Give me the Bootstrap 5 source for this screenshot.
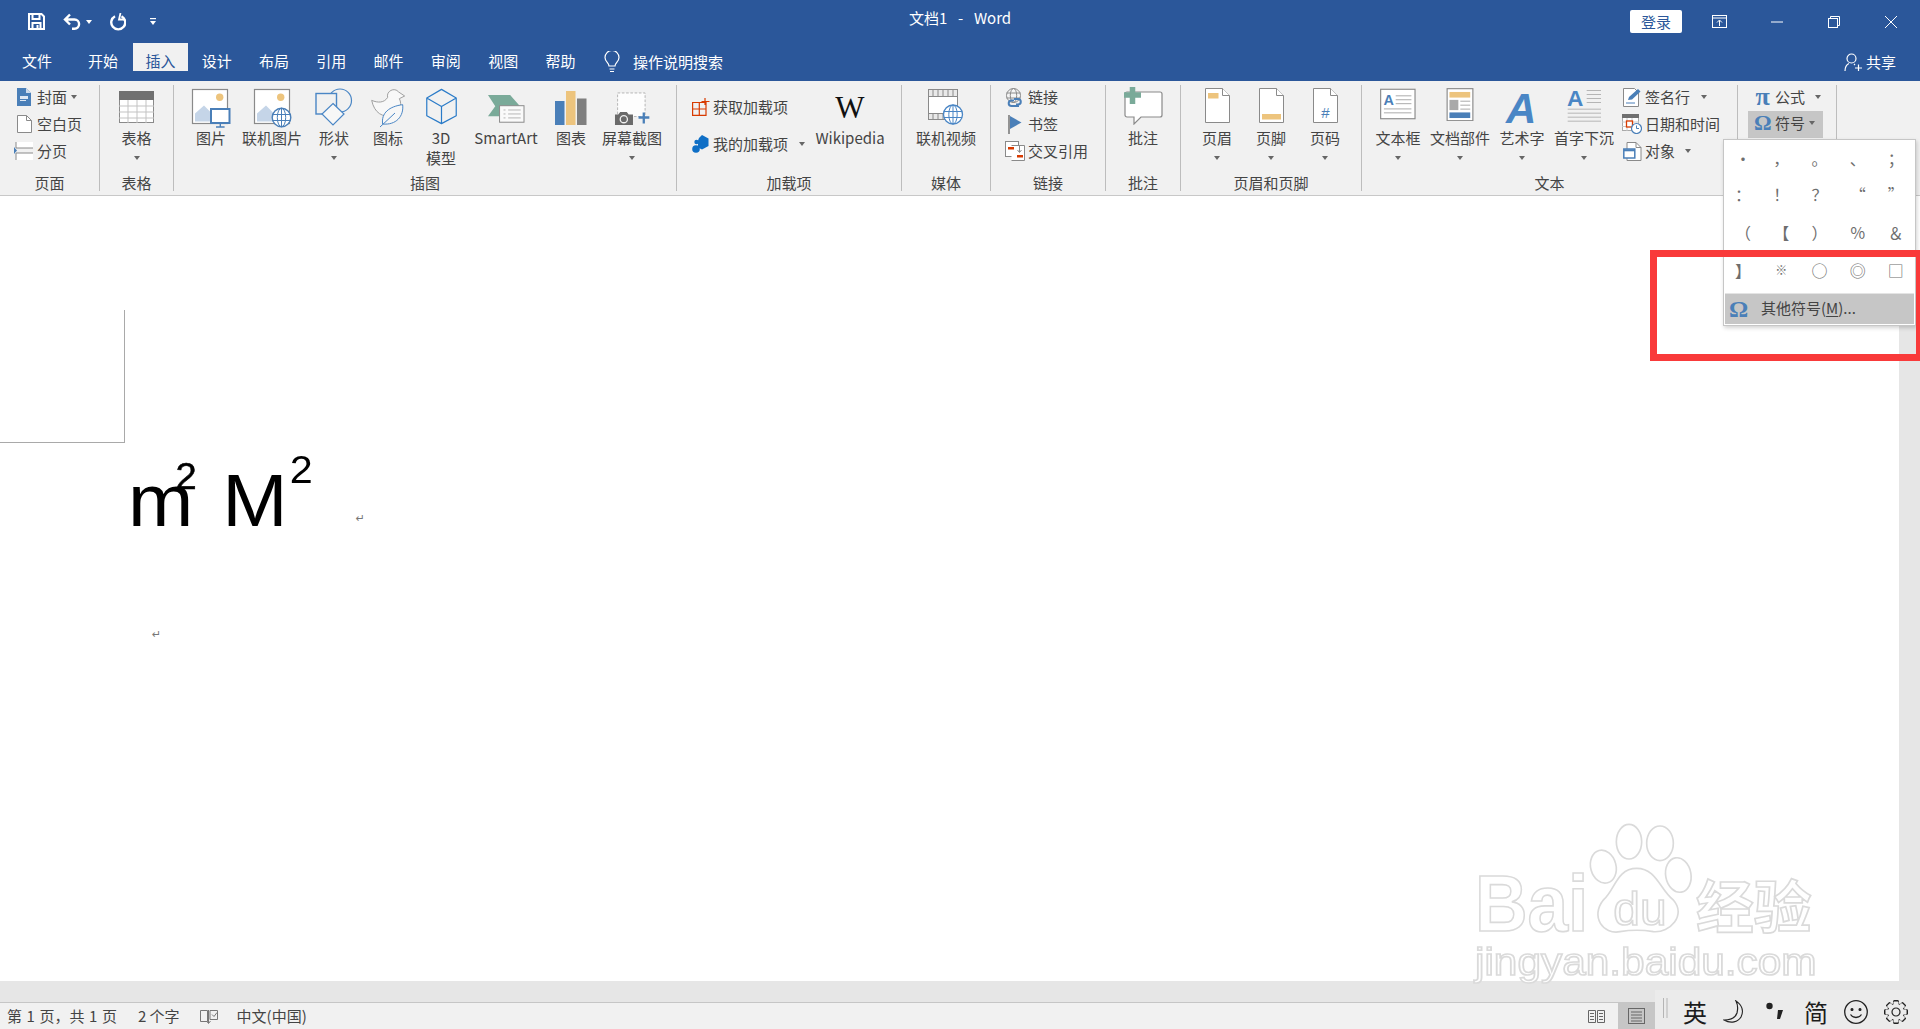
<!DOCTYPE html>
<html lang="zh-CN">
<head>
  <meta charset="UTF-8">
  <meta name="viewport" content="width=device-width, initial-scale=1.0">
  <title>文档1 - Word</title>
  <link href="https://cdn.jsdelivr.net/npm/bootstrap@5.3.0/dist/css/bootstrap.min.css" rel="stylesheet">
  <style>
    html, body { height: 100%; }
    body {
      font-family: "Noto Sans CJK SC", "Liberation Sans", sans-serif;
      font-size: 15px;
      line-height: 20px;
      color: #444;
      background: #fff;
      overflow: hidden;
      position: relative;
    }
    svg { display: block; flex: none; }

    /* 间距 */
    .ml-4 { margin-left: 4px; } .ml-10 { margin-left: 10px; } .ml-11 { margin-left: 11px; }
    .ml-15 { margin-left: 15px; } .ml-16 { margin-left: 16px; } .ml-18 { margin-left: 18px; }
    .ml-19 { margin-left: 19px; } .ml-20 { margin-left: 20px; } .ml-21 { margin-left: 21px; }
    .ml-23 { margin-left: 23px; } .ml-44 { margin-left: 44px; } .ml-45 { margin-left: 45px; }
    .mt-i1 { margin-top: 1px; } .mt-i3 { margin-top: 3px; } .mt-i4 { margin-top: 4px; } .mt-i6 { margin-top: 6px; }

    /* 标题栏 */
    .titlebar { height: 43px; background: #2b579a; color: #fff; display: grid; grid-template-columns: 1fr auto 1fr; align-items: center; }
    .qat { padding-left: 28px; }
    .qat .caret { border-top-color: #fff; }
    .win-btns { padding-right: 23px; }
    .login { width: 52px; height: 23px; line-height: 23px; background: #fff; color: #2b579a; text-align: center; border-radius: 2px; margin-right: 30px; }
    .title-text { margin-top: -8px; word-spacing: 2px; }

    /* 选项卡 */
    .tabs { height: 38px; background: #2b579a; color: #fff; align-items: stretch; }
    .tabs .nav-link { color: #fff; padding: 8px 0 0; width: 57.3px; text-align: center; }
    .tabs .nav-link.active { background: #f1f1f1; color: #2b579a; width: 55px; margin: 0 0 0 1px; }
    .tabs .tab-file { width: 74px; }
    .tabs .tab-home { width: 58px; }
    .tell { margin-left: 15px; gap: 13px; }
    .share { margin-left: auto; padding-right: 24px; gap: 4px; }

    /* 功能区 */
    .ribbon { height: 115px; padding-top: 4px; background: #f1f1f1; border-bottom: 1px solid #c8c8c8; align-items: flex-start; }
    .rgroup { height: 106px; border-right: 1px solid #bdbdbd; display: flex; flex-direction: column; flex: none; }
    .g100 { width: 100px; } .g74 { width: 74px; } .g503 { width: 503px; } .g225 { width: 225px; } .g89 { width: 89px; }
    .g115 { width: 115px; } .g75 { width: 75px; } .g181 { width: 181px; } .g376 { width: 376px; } .g99 { width: 99px; }
    .rbody { height: 90px; display: flex; }
    .pl-5 { padding-left: 5px; } .pl-9 { padding-left: 9px; } .pl-10 { padding-left: 10px; } .pl-12 { padding-left: 12px; } .pl-14 { padding-left: 14px; }
    .rlabel { height: 16px; line-height: 16px; text-align: center; }
    .rbig { display: flex; flex-direction: column; align-items: center; padding-top: 3px; flex: none; }
    .rbig .ico { height: 40px; display: flex; align-items: flex-start; justify-content: center; }
    .it50 { width: 50px; } .it52 { width: 52px; } .it54 { width: 54px; } .it56 { width: 56px; }
    .it62 { width: 62px; } .it72 { width: 72px; } .it80 { width: 80px; }
    .rsmall { height: 27px; padding-bottom: 3px; display: flex; align-items: center; white-space: nowrap; }
    .rsmall .ico { width: 20px; margin-right: 3px; display: flex; justify-content: center; flex: none; }
    .caret { width: 0; height: 0; border-left: 3.5px solid transparent; border-right: 3.5px solid transparent; border-top: 4px solid #666; display: inline-block; flex: none; }
    .caret-line { height: 20px; display: flex; align-items: center; }
    .addins { width: 133px; padding: 5px 0 0 15px; }
    .addins .rsmall { height: 37px; }
    .addins svg { margin-right: 3px; }
    .w-big { font-family: "Liberation Serif", serif; font-size: 31px; line-height: 24px; color: #111; padding-top: 8px; }
    .note-item { padding-top: 2px; }
    .text-small { margin-left: 7px; }
    .math-ico { font-family: "Liberation Serif", serif; font-weight: 700; font-size: 26px; color: #4a7fb8; width: 17px; text-align: center; margin-right: 4px; }
    .math-omega { font-size: 22px; }
    .sym-first { padding-left: 6px; }
    .sym-row { padding-left: 6px; width: 75px; margin-top: -1px; background: #c6c6c6; }

    /* 文档区 */
    .docwrap { height: 785px; display: flex; }
    .canvas { flex: 1 1 auto; overflow: hidden; background: #fff; }
    .vscroll { width: 21px; background: #e6e6e6; margin-top: 54px; }
    .crop { width: 125px; height: 133px; margin-top: 114px; border-right: 1px solid #a9a9a9; border-bottom: 1px solid #a9a9a9; }
    .formula { font-family: "Liberation Sans", sans-serif; color: #000; font-size: 74px; line-height: 90px; margin: 13px 0 0 128px; white-space: nowrap; transform: scaleX(1.06); transform-origin: left center; display: inline-block; }
    .formula sup { font-size: 39px; top: -43px; line-height: 0; margin-left: 2px; }
    .formula .sq { font-size: 36px; margin-left: -16.8px; top: -37px; -webkit-text-stroke: .5px #000; }
    .formula .gap { margin-left: 24px; }
    .pmark { font-family: "DejaVu Sans", sans-serif; font-size: 11px; color: #777; line-height: 12px; }
    .pmark-a { margin-left: 50px; position: relative; top: -4px; }
    .pmark-b { margin: 83px 0 0 152px; }
    .hscroll { height: 21px; background: #e6e6e6; }

    /* 状态栏 */
    .statusbar { height: 27px; background: #f1f1f1; border-top: 1px solid #c6c6c6; padding-left: 7px; align-items: center; white-space: nowrap; }
    .page-count { word-spacing: 1.2px; }
    .view-active { width: 37px; height: 26px; background: #c6c6c6; margin-left: 13px; margin-right: 265px; display: flex; align-items: center; justify-content: center; }

    /* 输入法条 */
    .ime { position: absolute; right: 0; bottom: 0; width: 265px; height: 39px; background: #ebebeb; color: #1c1c1c; display: flex; align-items: center; padding-left: 8px; }
    .ime-bars { margin-top: -3px; }
    .ime-char { font-size: 24px; line-height: 28px; margin-top: 4px; }

    /* 符号下拉 */
    .symbol-menu { position: absolute; left: 1723px; top: 139px; width: 193px; height: 187px; background: #fff; border: 1px solid #c6c6c6; box-shadow: 1px 2px 4px rgba(0,0,0,.18); z-index: 5; }
    .sym-grid { display: grid; grid-template-columns: repeat(5, 38.2px); grid-template-rows: 35px 38px 38px 38px; color: #6e6e6e; font-size: 16px; height: 153px; }
    .sym-grid span { display: flex; align-items: center; justify-content: center; }
    .sym-grid .sym-note { font-size: 12px; }
    .sym-more { height: 30px; margin: 1px 1px 0; background: #c6c6c6; display: flex; align-items: center; padding-left: 4px; box-shadow: 0 -1px 0 #e4e4e4; }
    .sym-more b { font-family: "Liberation Serif", serif; font-size: 24px; color: #4a7fb8; width: 19px; text-align: center; margin-right: 13px; }
    .sym-more span { margin-top: -3px; }
    .sym-more u { text-underline-offset: 2px; }

    /* 标注红框 */
    .red-frame { position: absolute; left: 1650px; top: 250px; right: 0; height: 111px; border: 7px solid #f93a3a; border-right-width: 4px; z-index: 6; pointer-events: none; }

    /* 水印 */
    .watermark { position: absolute; left: 1470px; top: 815px; z-index: 4; filter: blur(.5px); }
    .watermark text, .watermark ellipse, .watermark path { fill: #fff; stroke: #dadada; stroke-width: 5; }
    .wm-latin { font-family: "Liberation Sans", sans-serif; }
    .wm-cjk { font-family: "Noto Sans CJK SC", sans-serif; }
  </style>
</head>
<body>
  <!-- 标题栏 -->
  <div class="titlebar">
    <div class="qat d-flex align-items-center">
      <svg width="17" height="17" viewBox="0 0 17 17" fill="none" stroke="#fff" stroke-width="2"><path d="M1 1h12.5L16 3.5V16H1z"/><path d="M4.5 1v5h7V1M4.5 16v-6h8v6"/><rect x="8.5" y="12" width="2" height="4" fill="#fff" stroke="none"/></svg>
      <svg class="ml-18" width="19" height="17" viewBox="0 0 19 17" fill="none" stroke="#fff" stroke-width="2.4"><path d="M7 1.5 2 6.5l5 5M2 6.5h9.5a4.6 4.6 0 0 1 0 9.2H9"/></svg>
      <span class="caret ms-1"></span>
      <svg class="ml-18" width="16" height="18" viewBox="0 0 16 18" fill="none" stroke="#fff" stroke-width="2.4"><path d="M5 3.200A7 7 0 1 0 11.500 3.200"/><path d="M10.500 0 9 6.500h5" stroke-width="1.800"/></svg>
      <svg class="ml-23" width="8" height="7" viewBox="0 0 8 7" fill="#fff"><rect x="1" width="6" height="1.200"/><path d="M1 3h6L4 7z"/></svg>
    </div>
    <div class="title-text">文档1&nbsp; - &nbsp;Word</div>
    <div class="win-btns d-flex align-items-center justify-content-end">
      <div class="login">登录</div>
      <svg width="15" height="13" viewBox="0 0 15 13" fill="none" stroke="#fff"><rect x=".5" y=".5" width="14" height="12"/><path d="M.5 3h14M7.500 11V5.500M5 7.500l2.500-2.500L10 7.500"/></svg>
      <svg class="ml-44" width="12" height="12" viewBox="0 0 12 12" stroke="#fff"><path d="M0 6h12"/></svg>
      <svg class="ml-45" width="12" height="12" viewBox="0 0 12 12" fill="none" stroke="#fff"><rect x=".5" y="2.500" width="9" height="9"/><path d="M2.500 2.500v-2h9v9h-2"/></svg>
      <svg class="ml-45" width="12" height="12" viewBox="0 0 12 12" stroke="#fff"><path d="M0 0l12 12M12 0 0 12"/></svg>
    </div>
  </div>

  <!-- 选项卡 -->
  <ul class="nav tabs">
    <li class="nav-item"><a class="nav-link tab-file" href="#">文件</a></li>
    <li class="nav-item"><a class="nav-link tab-home" href="#">开始</a></li>
    <li class="nav-item"><a class="nav-link active" href="#">插入</a></li>
    <li class="nav-item"><a class="nav-link" href="#">设计</a></li>
    <li class="nav-item"><a class="nav-link" href="#">布局</a></li>
    <li class="nav-item"><a class="nav-link" href="#">引用</a></li>
    <li class="nav-item"><a class="nav-link" href="#">邮件</a></li>
    <li class="nav-item"><a class="nav-link" href="#">审阅</a></li>
    <li class="nav-item"><a class="nav-link" href="#">视图</a></li>
    <li class="nav-item"><a class="nav-link" href="#">帮助</a></li>
    <li class="nav-item d-flex align-items-center tell">
      <svg width="16" height="23" viewBox="0 0 16 23" fill="none" stroke="#fff" stroke-width="1.200"><path d="M5 15c0-3-4-4.500-4-8.500a7 7 0 0 1 14 0c0 4-4 5.500-4 8.500z"/><path d="M5.500 18h5M6 20.500h4"/></svg>
      <span>操作说明搜索</span>
    </li>
    <li class="nav-item d-flex align-items-center share">
      <svg width="18" height="18" viewBox="0 0 18 18" fill="none" stroke="#fff" stroke-width="1.200"><circle cx="7.500" cy="5.500" r="4.500"/><path d="M1 18c0-4 2-6.500 4-7.500M10 11l1 1M11 15h7M14.500 11.500v6.500"/></svg>
      <span>共享</span>
    </li>
  </ul>

  <!-- 功能区 -->
  <div class="ribbon d-flex">
    <!-- 页面 -->
    <div class="rgroup g100">
      <div class="rbody flex-column pl-14">
        <div class="rsmall"><span class="ico"><svg width="14" height="18" viewBox="0 0 14 18"><path d="M0 0h9l5 5v13H0z" fill="#4a7fb8"/><path d="M9 0v5h5z" fill="#cfdcec"/><path d="M3 8h8v3H3z" fill="#dfe8f3"/><path d="M3 12h6v1H3z" fill="#dfe8f3"/></svg></span>封面<span class="caret ms-1"></span></div>
        <div class="rsmall"><span class="ico"><svg width="15" height="18" viewBox="0 0 15 18" fill="#fff" stroke="#8a8a8a"><path d="M.500.500h9l5 5v12H.500z"/><path d="M9.500.500v5h5" fill="none"/></svg></span>空白页</div>
        <div class="rsmall"><span class="ico"><svg width="20" height="18" viewBox="0 0 20 18"><rect x="2" y="0" width="17" height="6" fill="#fff"/><path d="M2 0v6h17" fill="none" stroke="#8a8a8a"/><rect x="2" y="11" width="17" height="7" fill="#fff"/><path d="M2 18v-7h17" fill="none" stroke="#8a8a8a"/><path d="M0 5l3 3.500L0 12z" fill="#4a7fb8"/></svg></span>分页</div>
      </div>
      <div class="rlabel">页面</div>
    </div>

    <!-- 表格 -->
    <div class="rgroup g74">
      <div class="rbody">
        <div class="rbig w-100">
          <div class="ico"><svg class="mt-i3" width="35" height="32" viewBox="0 0 35 32"><rect x=".5" y=".5" width="34" height="31" fill="#fff" stroke="#8a8a8a"/><rect width="35" height="9" fill="#707070"/><path d="M0 15h35M0 21h35M0 27h35M9 9v23M18 9v23M27 9v23" stroke="#c3c3c3"/></svg></div>
          <div>表格</div>
          <div class="caret-line"><span class="caret"></span></div>
        </div>
      </div>
      <div class="rlabel">表格</div>
    </div>

    <!-- 插图 -->
    <div class="rgroup g503">
      <div class="rbody pl-12">
        <div class="rbig it50">
          <div class="ico"><svg width="40" height="40" viewBox="0 0 40 40"><rect x="1.500" y="1.500" width="35" height="34" fill="#fff" stroke="#8a8a8a" stroke-width="1.200"/><circle cx="28.700" cy="9.300" r="3.700" fill="#edc47d"/><path d="M4 33.500v-8l9-8 9 9v7z" fill="#c5d5e8"/><rect x="20" y="21" width="18.500" height="14" fill="#fff" stroke="#4a7fb8" stroke-width="2"/><path d="M29.300 35v4M25 39h8.600" stroke="#4a7fb8" stroke-width="1.400"/></svg></div>
          <div>图片</div>
        </div>
        <div class="rbig it72">
          <div class="ico"><svg width="40" height="40" viewBox="0 0 40 40" fill="none"><rect x="2.500" y="1.500" width="35" height="34" fill="#fff" stroke="#8a8a8a" stroke-width="1.200"/><circle cx="28.700" cy="9.300" r="3.700" fill="#edc47d"/><path d="M5 33.500v-8l9-8 9 9v7z" fill="#c5d5e8"/><circle cx="29.500" cy="29.500" r="9.300" fill="#fff" stroke="#4a7fb8" stroke-width="1.400"/><ellipse cx="29.500" cy="29.500" rx="4.200" ry="9.300" stroke="#4a7fb8"/><path d="M20.500 26.500h18M20.500 32.500h18M29.500 20v19" stroke="#4a7fb8"/></svg></div>
          <div>联机图片</div>
        </div>
        <div class="rbig it52">
          <div class="ico"><svg width="40" height="40" viewBox="0 0 40 40"><circle cx="26" cy="12.500" r="11.500" fill="#f1f1f1" stroke="#4a86c5" stroke-width="1.200"/><rect x="2" y="5.500" width="20.500" height="20.500" fill="#f1f1f1" stroke="#4a86c5" stroke-width="1.400"/><path d="M19 15.500 30 26 19 37 8 26z" fill="#f7f7f7" stroke="#4a86c5" stroke-width="1.200"/></svg></div>
          <div>形状</div>
          <div class="caret-line"><span class="caret"></span></div>
        </div>
        <div class="rbig it56">
          <div class="ico"><svg width="35" height="40" viewBox="555 10 105 120"><path d="M605 38C600 20 625 6 638 22L656 34 640 42C650 60 640 85 620 92 590 100 565 85 557 47 575 55 595 55 605 38Z" fill="#f8f8f8" stroke="#a0a0a0" stroke-width="3"/><path d="M590 118C585 85 610 65 650 60 654 95 630 122 590 118Z" fill="#f7f7f7" stroke="#4a86c5" stroke-width="3"/><path d="M582 127 627 85" stroke="#4a86c5" stroke-width="3"/></svg></div>
          <div>图标</div>
        </div>
        <div class="rbig it50">
          <div class="ico"><svg width="33" height="37" viewBox="722 16 96 108" fill="none" stroke="#2a7bc8" stroke-width="3.500" stroke-linejoin="round"><path d="M770 20 813 45v52l-43 23-43-23V45zM727 45l43 25 43-25M770 70v50"/></svg></div>
          <div>3D</div>
          <div>模型</div>
        </div>
        <div class="rbig it80">
          <div class="ico"><svg class="mt-i6" width="38" height="30" viewBox="50 25 115 90"><path d="M53 28h67l30 34-62 30H53l22-30z" fill="#7aaa99"/><rect x="88" y="60" width="74" height="50" fill="#fafafa" stroke="#8a8a8a" stroke-width="3"/><path d="M114 73h38M114 85h38M114 97h38M100 73h6M100 85h6M100 97h6" stroke="#a8a8a8" stroke-width="2.500"/></svg></div>
          <div>SmartArt</div>
        </div>
        <div class="rbig it50">
          <div class="ico"><svg class="mt-i3" width="32" height="34" viewBox="0 0 32 34"><rect x="0" y="10" width="9.500" height="24" fill="#4a7fb8"/><rect x="11" y="0" width="9.500" height="34" fill="#edc47d"/><rect x="22" y="7.500" width="9.500" height="26.500" fill="#7f7f7f"/></svg></div>
          <div>图表</div>
        </div>
        <div class="rbig it72">
          <div class="ico"><svg class="mt-i3" width="36" height="36" viewBox="432 20 110 102"><rect x="443" y="22" width="84" height="72" fill="#fdfdfd" stroke="#a8a8a8" stroke-width="2.500" stroke-dasharray="8 5"/><path d="M435 120V88h10l6-8h20l6 8h13v32z" fill="#6a6a6a"/><circle cx="462" cy="102" r="11" fill="#6a6a6a" stroke="#f1f1f1" stroke-width="4"/><path d="M507 97h33M523 82v33" stroke="#4a7fb8" stroke-width="7"/></svg></div>
          <div>屏幕截图</div>
          <div class="caret-line"><span class="caret"></span></div>
        </div>
      </div>
      <div class="rlabel">插图</div>
    </div>

    <!-- 加载项 -->
    <div class="rgroup g225">
      <div class="rbody">
        <div class="addins">
          <div class="rsmall"><svg width="18" height="18" viewBox="0 0 18 18" fill="none" stroke="#d83b01" stroke-width="1.200"><path d="M.6 4.500h13.400V17.400H.6zM.6 11h13.400M7.300 4.500v13M13 0v7M9.500 3.500h8"/></svg>获取加载项</div>
          <div class="rsmall"><svg width="18" height="18" viewBox="0 0 18 18" fill="#0f6fc6"><path d="M10 0l6.500 3.500v7.500L10 14.500l-4-2V5.500L7 3z"/><circle cx="4" cy="14" r="3.800"/><circle cx="4.500" cy="7" r="2.200"/></svg>我的加载项<span class="caret ml-11"></span></div>
        </div>
        <div class="rbig it80">
          <div class="ico w-big">W</div>
          <div>Wikipedia</div>
        </div>
      </div>
      <div class="rlabel">加载项</div>
    </div>

    <!-- 媒体 -->
    <div class="rgroup g89">
      <div class="rbody">
        <div class="rbig w-100">
          <div class="ico"><svg class="mt-i1" width="36" height="36" viewBox="0 0 36 36" fill="none"><rect x=".500" y=".500" width="29" height="30" fill="#fff" stroke="#8a8a8a"/><rect x="1" y="1" width="28" height="6" fill="#e9e9e9"/><rect x="1" y="24" width="28" height="6" fill="#e9e9e9"/><path d="M0 7.500h30M0 24.500h30M5 1v6M10 1v6M15 1v6M20 1v6M25 1v6M5 24v6M10 24v6M15 24v6" stroke="#8a8a8a"/><circle cx="25" cy="25.500" r="9.500" fill="#fff" stroke="#4a86c5" stroke-width="1.300"/><ellipse cx="25" cy="25.500" rx="4.200" ry="9.500" stroke="#4a86c5"/><path d="M16 22.500h18M16 28.500h18M25 16v19" stroke="#4a86c5"/></svg></div>
          <div>联机视频</div>
        </div>
      </div>
      <div class="rlabel">媒体</div>
    </div>

    <!-- 链接 -->
    <div class="rgroup g115">
      <div class="rbody flex-column pl-14">
        <div class="rsmall"><span class="ico"><svg width="20" height="19" viewBox="0 0 20 19" fill="none"><circle cx="8.500" cy="7.500" r="7" fill="#f5f5f5" stroke="#8a8a8a"/><ellipse cx="8.500" cy="7.500" rx="3.200" ry="7" stroke="#8a8a8a"/><path d="M1.500 5h14M1.500 10h14" stroke="#8a8a8a"/><path d="M9 11h4a2.800 2.800 0 0 1 0 5.600H11M14 18H6.500a2.800 2.800 0 0 1 0-5.600H9" stroke="#4a7fb8" stroke-width="2"/></svg></span>链接</div>
        <div class="rsmall"><span class="ico"><svg width="14" height="19" viewBox="0 0 14 19"><path d="M1 0v19" stroke="#6a6a6a" stroke-width="1.400"/><path d="M2 1l11.500 6.500L2 14z" fill="#4a7fb8"/></svg></span>书签</div>
        <div class="rsmall"><span class="ico"><svg width="20" height="20" viewBox="0 0 20 20" fill="#fff" stroke="#8a8a8a"><rect x=".500" y=".500" width="13" height="15"/><path d="M6.500 4.500h13v15h-13"/><rect x="3" y="6" width="6" height="2.500" fill="#d83b01" stroke="none"/><rect x="12" y="14" width="6" height="2.500" fill="#d83b01" stroke="none"/><path d="M14.500 5v6M12.500 9l2 2.500 2-2.500" fill="none"/></svg></span>交叉引用</div>
      </div>
      <div class="rlabel">链接</div>
    </div>

    <!-- 批注 -->
    <div class="rgroup g75">
      <div class="rbody">
        <div class="rbig w-100 note-item">
          <div class="ico"><svg width="39" height="38" viewBox="0 0 39 38"><path d="M3 5h33a2 2 0 0 1 2 2v21a2 2 0 0 1-2 2H17l-7 7v-7H3a2 2 0 0 1-2-2V7a2 2 0 0 1 2-2z" fill="#fff" stroke="#8a8a8a" stroke-width="1.200"/><path d="M0 8h17M8.500 0v17" stroke="#7aaa99" stroke-width="5.500"/></svg></div>
          <div class="mt-i1">批注</div>
        </div>
      </div>
      <div class="rlabel">批注</div>
    </div>

    <!-- 页眉和页脚 -->
    <div class="rgroup g181">
      <div class="rbody pl-9">
        <div class="rbig it54">
          <div class="ico"><svg width="25" height="35" viewBox="0 0 25 35" fill="#fff" stroke="#8a8a8a"><path d="M.5.500h17l7 7v27H.5z"/><path d="M17.500.500v7h7"/><rect x="3" y="5" width="10.500" height="5.500" fill="#edc47d" stroke="none"/></svg></div>
          <div>页眉</div>
          <div class="caret-line"><span class="caret"></span></div>
        </div>
        <div class="rbig it54">
          <div class="ico"><svg width="25" height="35" viewBox="0 0 25 35" fill="#fff" stroke="#8a8a8a"><path d="M.5.500h17l7 7v27H.5z"/><path d="M17.500.500v7h7"/><rect x="3" y="26" width="19" height="5.500" fill="#edc47d" stroke="none"/></svg></div>
          <div>页脚</div>
          <div class="caret-line"><span class="caret"></span></div>
        </div>
        <div class="rbig it54">
          <div class="ico"><svg width="25" height="35" viewBox="0 0 25 35" fill="#fff" stroke="#8a8a8a"><path d="M.5.500h17l7 7v27H.5z"/><path d="M17.500.500v7h7"/><text x="12.500" y="30" text-anchor="middle" font-family="Liberation Sans, sans-serif" font-size="15" fill="#4a7fb8" stroke="none">#</text></svg></div>
          <div>页码</div>
          <div class="caret-line"><span class="caret"></span></div>
        </div>
      </div>
      <div class="rlabel">页眉和页脚</div>
    </div>

    <!-- 文本 -->
    <div class="rgroup g376">
      <div class="rbody pl-5">
        <div class="rbig it62">
          <div class="ico"><svg width="36" height="32" viewBox="18 20 110 94"><rect x="20" y="22" width="105" height="90" fill="#fff" stroke="#8a8a8a" stroke-width="3.500"/><text x="29" y="70" font-family="Liberation Sans, sans-serif" font-size="44" font-weight="700" fill="#4a7fb8">A</text><path d="M66 42h48M66 54h48M66 66h48M30 82h84M30 94h84" stroke="#a9a9a9" stroke-width="3"/></svg></div>
          <div>文本框</div>
          <div class="caret-line"><span class="caret"></span></div>
        </div>
        <div class="rbig it62">
          <div class="ico"><svg width="28" height="33" viewBox="216 16 82 100"><rect x="218" y="18" width="78" height="97" fill="#fff" stroke="#8a8a8a" stroke-width="3.500"/><rect x="225" y="28" width="63" height="17" fill="#edc47d"/><rect x="225" y="52" width="27" height="31" fill="#a9a9a9"/><path d="M258 56h30M258 68h30M258 80h30" stroke="#a9a9a9" stroke-width="3"/><rect x="225" y="90" width="63" height="17" fill="#4a7fb8"/></svg></div>
          <div>文档部件</div>
          <div class="caret-line"><span class="caret"></span></div>
        </div>
        <div class="rbig it62">
          <div class="ico"><svg class="mt-i3" width="34" height="34" viewBox="0 0 34 34"><text x="1" y="32" font-family="Liberation Sans, sans-serif" font-size="42" font-style="italic" font-weight="700" fill="#4a86c5">A</text></svg></div>
          <div>艺术字</div>
          <div class="caret-line"><span class="caret"></span></div>
        </div>
        <div class="rbig it62">
          <div class="ico"><svg width="35" height="35" viewBox="573 16 105 102"><text x="573" y="70" font-family="Liberation Sans, sans-serif" font-size="68" font-weight="700" fill="#4a86c5">A</text><path d="M632 22h43M632 34h43M632 46h43M632 58h43M575 78h100M575 90h100M575 102h100M575 114h100" stroke="#b5b5b5" stroke-width="3"/></svg></div>
          <div>首字下沉</div>
          <div class="caret-line"><span class="caret"></span></div>
        </div>
        <div class="text-small">
          <div class="rsmall"><span class="ico"><svg width="19" height="19" viewBox="0 0 19 19" fill="none"><path d="M.500.500h11l4 4v14H.500z" fill="#fff" stroke="#8a8a8a"/><path d="M3 15h9" stroke="#4a7fb8"/><path d="M5 12l1-3L15 1l2.500 2.500-8.500 8z" fill="#4a7fb8"/></svg></span>签名行<span class="caret ml-11"></span></div>
          <div class="rsmall"><span class="ico"><svg width="20" height="20" viewBox="0 0 20 20" fill="none"><rect x=".500" y=".500" width="16" height="16" fill="#fff" stroke="#a9a9a9"/><rect y="0" width="17" height="4" fill="#707070"/><path d="M0 8h17M0 12.500h17M5 4v13M10 4v13" stroke="#c8c8c8"/><rect x="4.500" y="7" width="6" height="6" fill="#fff" stroke="#d83b01" stroke-width="1.300"/><circle cx="14.500" cy="14.500" r="5" fill="#fff" stroke="#4a7fb8" stroke-width="1.200"/><path d="M14.500 11.500v3h2.500" stroke="#4a7fb8"/></svg></span>日期和时间</div>
          <div class="rsmall"><span class="ico"><svg width="19" height="19" viewBox="0 0 19 19" fill="none"><path d="M4 .500h9l5 5v13H4z" fill="#fff" stroke="#8a8a8a"/><path d="M13 .500v5h5" stroke="#8a8a8a"/><rect x=".800" y="7" width="11" height="9" fill="#fff" stroke="#4a7fb8" stroke-width="1.500"/><path d="M1 8.300h11" stroke="#4a7fb8" stroke-width="2"/></svg></span>对象<span class="caret ml-10"></span></div>
        </div>
      </div>
      <div class="rlabel">文本</div>
    </div>

    <!-- 符号 -->
    <div class="rgroup g99">
      <div class="rbody flex-column pl-10">
        <div class="rsmall sym-first"><span class="math-ico">π</span>公式<span class="caret ml-10"></span></div>
        <div class="rsmall sym-row"><span class="math-ico math-omega">Ω</span>符号<span class="caret ml-4"></span></div>
      </div>
      <div class="rlabel"></div>
    </div>
  </div>

  <!-- 文档区 -->
  <div class="docwrap">
    <div class="canvas">
      <div class="crop"></div>
      <div class="formula">m<sup class="sq">2</sup><span class="gap">M</span><sup>2</sup></div>
      <span class="pmark pmark-a">↵</span>
      <div class="pmark pmark-b">↵</div>
    </div>
    <div class="vscroll"></div>
  </div>
  <div class="hscroll"></div>

  <!-- 状态栏 -->
  <div class="statusbar d-flex">
    <span class="page-count">第 1 页，共 1 页</span>
    <span class="ml-21">2 个字</span>
    <svg class="ml-20" width="18" height="15" viewBox="0 0 18 15" fill="none" stroke="#777"><path d="M.500 1.500h7v11h-7zM10 1.500h7.500v9H10z"/><path d="M8.500 1v13M6.500 12l2 2.500 2-2.500M12 5.500l2 2 3-4"/></svg>
    <span class="ml-19">中文(中国)</span>
    <svg class="ms-auto" width="17" height="15" viewBox="0 0 17 15" fill="none" stroke="#666"><path d="M.500 1.500h7v12h-7zM9.500 1.500h7v12h-7zM2 4.500h4M2 7.500h4M2 10.500h4M11 4.500h4M11 7.500h4M11 10.500h4"/></svg>
    <div class="view-active"><svg width="17" height="16" viewBox="0 0 17 16" fill="none" stroke="#666"><rect x=".500" y=".500" width="16" height="15"/><path d="M3 4h11M3 7h11M3 10h11M3 13h11"/></svg></div>
  </div>

  <!-- 输入法条 -->
  <div class="ime">
    <svg class="ime-bars" width="5" height="20" viewBox="0 0 5 20" stroke="#b5b5b5"><path d="M.500 0v20M4 0v20"/></svg>
    <span class="ime-char ml-15">英</span>
    <svg class="ml-16 mt-i4" width="23" height="24" viewBox="0 0 23 24" fill="none" stroke="#222" stroke-width="1.200"><path d="M13 1c6 4 8 10 5 16-3 5-10 7-17 3 6 0 11-1 13-7 1-4 1-8-1-12z"/></svg>
    <svg class="ml-20 mt-i3" width="18" height="18" viewBox="0 0 18 18" fill="#222"><circle cx="3.500" cy="4" r="3.200"/><path d="M12 8h5l-3 9h-3z"/></svg>
    <span class="ime-char ml-20">简</span>
    <svg class="ml-16 mt-i4" width="24" height="24" viewBox="0 0 24 24" fill="none" stroke="#222" stroke-width="1.300"><circle cx="12" cy="12" r="11.300"/><circle cx="8" cy="9.500" r=".9" fill="#222"/><circle cx="16" cy="9.500" r=".9" fill="#222"/><path d="M6.500 14.500c2.500 4 8.500 4 11 0"/></svg>
    <svg class="ml-16 mt-i4" width="24" height="24" viewBox="-12 -12 24 24">
      <defs><g id="gearShape"><circle r="9"/><rect x="-2.800" y="-12" width="5.600" height="24" rx="1.200"/><rect x="-2.800" y="-12" width="5.600" height="24" rx="1.200" transform="rotate(45)"/><rect x="-2.800" y="-12" width="5.600" height="24" rx="1.200" transform="rotate(90)"/><rect x="-2.800" y="-12" width="5.600" height="24" rx="1.200" transform="rotate(135)"/></g></defs>
      <use href="#gearShape" fill="#222"/><use href="#gearShape" fill="#ebebeb" transform="scale(.88)"/><circle r="4" fill="none" stroke="#222" stroke-width="1.200"/>
    </svg>
  </div>

  <!-- 符号下拉 -->
  <div class="symbol-menu">
    <div class="sym-grid">
      <span>·</span><span>，</span><span>。</span><span>、</span><span>；</span>
      <span>：</span><span>！</span><span>？</span><span>“</span><span>”</span>
      <span>（</span><span>【</span><span>）</span><span>％</span><span>＆</span>
      <span>】</span><span class="sym-note">※</span><span>○</span><span>◎</span><span>□</span>
    </div>
    <div class="sym-more"><b>Ω</b><span>其他符号(<u>M</u>)...</span></div>
  </div>

  <!-- 红框标注 -->
  <div class="red-frame"></div>

  <!-- 水印 -->
  <svg class="watermark" width="360" height="180" viewBox="90 45 1080 540">
    <ellipse cx="567" cy="125" rx="38" ry="52"/>
    <ellipse cx="660" cy="130" rx="40" ry="52"/>
    <ellipse cx="490" cy="200" rx="38" ry="50" transform="rotate(-15 490 200)"/>
    <ellipse cx="715" cy="225" rx="38" ry="52" transform="rotate(-10 715 225)"/>
    <path d="M590 205C650 205 660 270 700 300 740 345 690 400 640 395 610 390 570 390 540 395 490 405 450 350 490 300 525 270 530 205 590 205Z"/>
    <text class="wm-latin" x="105" y="393" font-weight="700" font-size="240" textLength="340" lengthAdjust="spacingAndGlyphs">Bai</text>
    <text class="wm-latin" x="520" y="375" font-size="140" textLength="160" lengthAdjust="spacingAndGlyphs">du</text>
    <text class="wm-cjk" x="768" y="385" font-weight="700" font-size="172" textLength="347" lengthAdjust="spacingAndGlyphs">经验</text>
    <text class="wm-latin" x="105" y="525" font-size="118" textLength="1025" lengthAdjust="spacingAndGlyphs">jingyan.baidu.com</text>
  </svg>

  <script src="https://cdn.jsdelivr.net/npm/bootstrap@5.3.0/dist/js/bootstrap.bundle.min.js"></script>
</body>
</html>
